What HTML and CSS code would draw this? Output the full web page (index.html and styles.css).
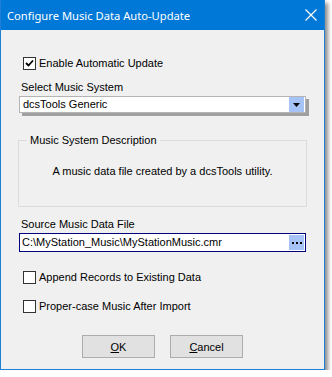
FILE: index.html
```html
<!DOCTYPE html>
<html lang="en">
<head>
    <meta charset="UTF-8">
    <title>Configure Music Data Auto-Update</title>
    <link rel="stylesheet" href="styles.css">
</head>
<body>

    <div class="window">
        <div class="titlebar">
            <span class="title">Configure Music Data Auto-Update</span>
            <svg class="close" width="12" height="12" viewBox="0 0 12 12">
                <path d="M0.5 0.5 L11.5 11.5 M11.5 0.5 L0.5 11.5" stroke="#fff" stroke-width="1.2"/>
            </svg>
        </div>

        <div class="content">
            <div class="check-row first">
                <span class="checkbox checked">
                    <svg width="11" height="11" viewBox="0 0 11 11">
                        <path d="M2 5 L4.5 7.5 L9 2.5" stroke="#000" stroke-width="1.8" fill="none"/>
                    </svg>
                </span>
                <span>Enable Automatic Update</span>
            </div>

            <div class="field-label">Select Music System</div>
            <div class="combo">
                <span class="value">dcsTools Generic</span>
                <span class="drop-btn">
                    <svg width="7" height="4" viewBox="0 0 7 4"><path d="M0 0 H7 L3.5 4 Z" fill="#000"/></svg>
                </span>
            </div>

            <fieldset class="group">
                <legend>Music System Description</legend>
                <div class="description">A music data file created by a dcsTools utility.</div>
            </fieldset>

            <div class="field-label source">Source Music Data File</div>
            <div class="textbox">
                <span class="value">C:\MyStation_Music\MyStationMusic.cmr</span>
                <span class="browse-btn">
                    <i class="dot"></i><i class="dot"></i><i class="dot"></i>
                </span>
            </div>

            <div class="check-row append">
                <span class="checkbox"></span>
                <span>Append Records to Existing Data</span>
            </div>
            <div class="check-row">
                <span class="checkbox"></span>
                <span>Proper-case Music After Import</span>
            </div>

            <div class="buttons">
                <button><u>O</u>K</button>
                <button><u>C</u>ancel</button>
            </div>
        </div>
    </div>

</body>
</html>
```

FILE: styles.css
```css
body {
    margin: 0;
    background: #fff;
    font-family: "Liberation Sans", Arial, sans-serif;
    font-size: 11px;
    color: #000;
}

.window {
    width: 323px;
    height: 369px;
    background: #f0f0f0;
    border: 1px solid #1f7fd6;
    border-top: none;
    box-shadow: 3px 3px 4px rgba(0, 0, 0, 0.45);
}

.titlebar {
    height: 30px;
    background: #0078d7;
    display: flex;
    align-items: center;
    justify-content: space-between;
    padding: 0 7px 0 6px;
}

.title {
    color: #fff;
    font-family: "Noto Sans", "Open Sans", sans-serif;
    font-size: 11.2px;
}

.content {
    padding: 0 18px;
}

.check-row {
    display: flex;
    align-items: center;
    gap: 3px;
    height: 15px;
    margin-left: 4px;
    line-height: 13px;
}

.check-row.first {
    margin-top: 26px;
}

.check-row.append {
    margin-top: 18px;
    margin-bottom: 14px;
}

.checkbox {
    width: 11px;
    height: 11px;
    border: 1px solid #333;
    background: #fff;
    display: flex;
}

.field-label {
    line-height: 13px;
    padding-left: 2px;
    margin-top: 10px;
    margin-bottom: 2px;
}

.field-label.source {
    margin-top: 11px;
}

.combo, .textbox {
    display: flex;
    align-items: center;
    justify-content: space-between;
    background: #fff;
    line-height: 13px;
}

.combo {
    height: 15px;
    border: 1px solid #b4b4b4;
    box-shadow: 3px 3px 0 #a0a0a0;
    padding: 0 1px 0 3px;
}

.textbox {
    height: 17px;
    border: 1px solid #00007f;
    padding: 0 1px 0 2px;
}

.drop-btn, .browse-btn {
    width: 15px;
    background: #a5c3f6;
    display: flex;
    align-items: center;
    justify-content: center;
}

.drop-btn {
    height: 15px;
}

.browse-btn {
    height: 15px;
    gap: 2px;
}

.dot {
    width: 2px;
    height: 2px;
    background: #000;
}

.group {
    margin: 21px -1px 0;
    padding: 18px 0 28px;
    border: 1px solid #dcdcdc;
    line-height: 13px;
}

.group legend {
    margin-left: 8px;
    padding: 0 3px;
}

.description {
    text-align: center;
}

.buttons {
    display: flex;
    justify-content: center;
    gap: 15px;
    margin-top: 21px;
}

.buttons button {
    width: 73px;
    height: 23px;
    background: #e1e1e1;
    border: 1px solid #adadad;
    font-family: inherit;
    font-size: 11px;
    padding: 0;
}
```
